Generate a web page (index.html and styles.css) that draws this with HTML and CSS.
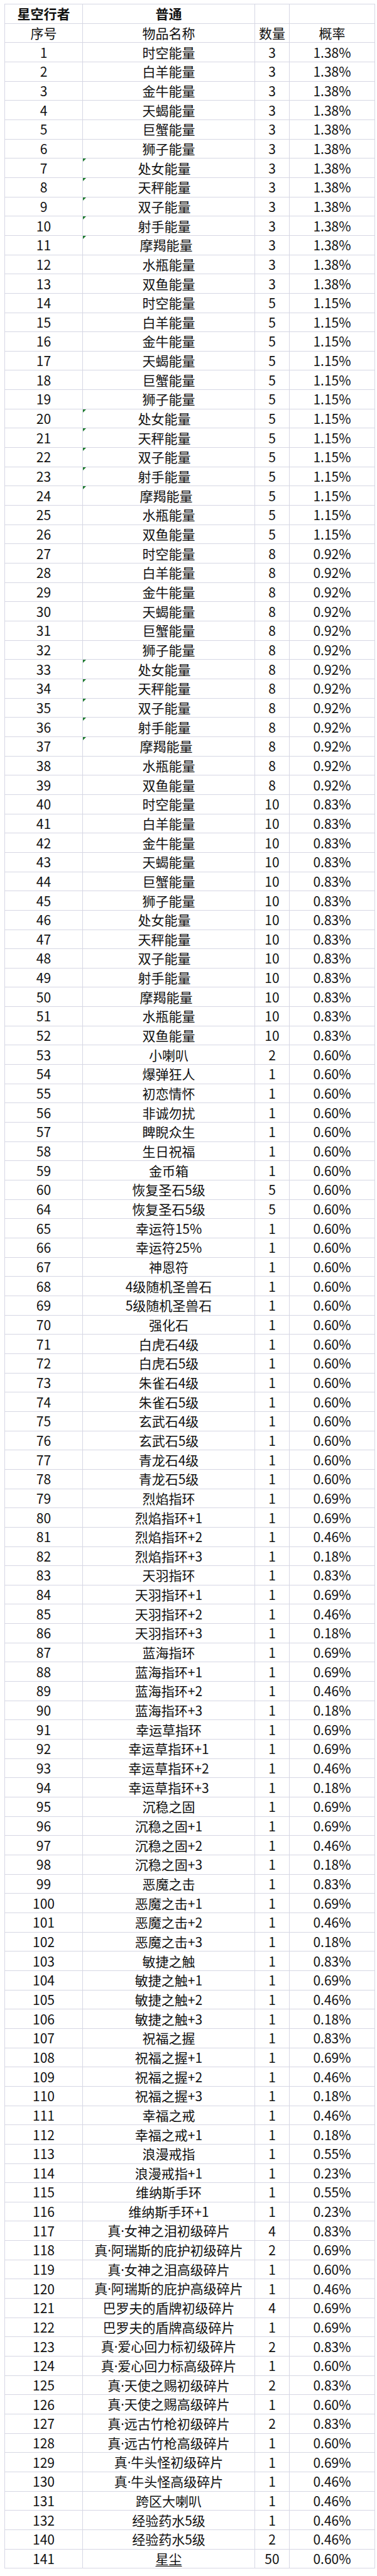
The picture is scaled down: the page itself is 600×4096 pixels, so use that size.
FILE: index.html
```html
<!DOCTYPE html>
<html lang="zh-CN">
<head>
<meta charset="utf-8">
<title>星空行者 普通</title>
<link rel="stylesheet" href="styles.css">
</head>
<body>
<table class="sheet">
<colgroup><col class="c1"><col class="c2"><col class="c3"><col class="c4"></colgroup>
<tbody>
<tr class="title"><td>星空行者</td><td>普通</td><td></td><td></td></tr>
<tr><td>序号</td><td>物品名称</td><td>数量</td><td>概率</td></tr>
<tr><td>1</td><td>时空能量</td><td>3</td><td>1.38%</td></tr>
<tr><td>2</td><td>白羊能量</td><td>3</td><td>1.38%</td></tr>
<tr><td>3</td><td>金牛能量</td><td>3</td><td>1.38%</td></tr>
<tr><td>4</td><td>天蝎能量</td><td>3</td><td>1.38%</td></tr>
<tr><td>5</td><td>巨蟹能量</td><td>3</td><td>1.38%</td></tr>
<tr><td>6</td><td>狮子能量</td><td>3</td><td>1.38%</td></tr>
<tr><td>7</td><td class="tri s1">处女能量</td><td>3</td><td>1.38%</td></tr>
<tr><td>8</td><td class="tri s1">天秤能量</td><td>3</td><td>1.38%</td></tr>
<tr><td>9</td><td class="tri s1">双子能量</td><td>3</td><td>1.38%</td></tr>
<tr><td>10</td><td class="tri s1">射手能量</td><td>3</td><td>1.38%</td></tr>
<tr><td>11</td><td class="tri s2">摩羯能量</td><td>3</td><td>1.38%</td></tr>
<tr><td>12</td><td>水瓶能量</td><td>3</td><td>1.38%</td></tr>
<tr><td>13</td><td>双鱼能量</td><td>3</td><td>1.38%</td></tr>
<tr><td>14</td><td>时空能量</td><td>5</td><td>1.15%</td></tr>
<tr><td>15</td><td>白羊能量</td><td>5</td><td>1.15%</td></tr>
<tr><td>16</td><td>金牛能量</td><td>5</td><td>1.15%</td></tr>
<tr><td>17</td><td>天蝎能量</td><td>5</td><td>1.15%</td></tr>
<tr><td>18</td><td>巨蟹能量</td><td>5</td><td>1.15%</td></tr>
<tr><td>19</td><td>狮子能量</td><td>5</td><td>1.15%</td></tr>
<tr><td>20</td><td class="tri s1">处女能量</td><td>5</td><td>1.15%</td></tr>
<tr><td>21</td><td class="tri s1">天秤能量</td><td>5</td><td>1.15%</td></tr>
<tr><td>22</td><td class="tri s1">双子能量</td><td>5</td><td>1.15%</td></tr>
<tr><td>23</td><td class="tri s1">射手能量</td><td>5</td><td>1.15%</td></tr>
<tr><td>24</td><td class="tri s2">摩羯能量</td><td>5</td><td>1.15%</td></tr>
<tr><td>25</td><td>水瓶能量</td><td>5</td><td>1.15%</td></tr>
<tr><td>26</td><td>双鱼能量</td><td>5</td><td>1.15%</td></tr>
<tr><td>27</td><td>时空能量</td><td>8</td><td>0.92%</td></tr>
<tr><td>28</td><td>白羊能量</td><td>8</td><td>0.92%</td></tr>
<tr><td>29</td><td>金牛能量</td><td>8</td><td>0.92%</td></tr>
<tr><td>30</td><td>天蝎能量</td><td>8</td><td>0.92%</td></tr>
<tr><td>31</td><td>巨蟹能量</td><td>8</td><td>0.92%</td></tr>
<tr><td>32</td><td>狮子能量</td><td>8</td><td>0.92%</td></tr>
<tr><td>33</td><td class="tri s1">处女能量</td><td>8</td><td>0.92%</td></tr>
<tr><td>34</td><td class="tri s1">天秤能量</td><td>8</td><td>0.92%</td></tr>
<tr><td>35</td><td class="tri s1">双子能量</td><td>8</td><td>0.92%</td></tr>
<tr><td>36</td><td class="tri s1">射手能量</td><td>8</td><td>0.92%</td></tr>
<tr><td>37</td><td class="tri s2">摩羯能量</td><td>8</td><td>0.92%</td></tr>
<tr><td>38</td><td>水瓶能量</td><td>8</td><td>0.92%</td></tr>
<tr><td>39</td><td>双鱼能量</td><td>8</td><td>0.92%</td></tr>
<tr><td>40</td><td>时空能量</td><td>10</td><td>0.83%</td></tr>
<tr><td>41</td><td>白羊能量</td><td>10</td><td>0.83%</td></tr>
<tr><td>42</td><td>金牛能量</td><td>10</td><td>0.83%</td></tr>
<tr><td>43</td><td>天蝎能量</td><td>10</td><td>0.83%</td></tr>
<tr><td>44</td><td>巨蟹能量</td><td>10</td><td>0.83%</td></tr>
<tr><td>45</td><td>狮子能量</td><td>10</td><td>0.83%</td></tr>
<tr><td>46</td><td class="s1">处女能量</td><td>10</td><td>0.83%</td></tr>
<tr><td>47</td><td class="s1">天秤能量</td><td>10</td><td>0.83%</td></tr>
<tr><td>48</td><td class="s1">双子能量</td><td>10</td><td>0.83%</td></tr>
<tr><td>49</td><td class="s1">射手能量</td><td>10</td><td>0.83%</td></tr>
<tr><td>50</td><td class="s2">摩羯能量</td><td>10</td><td>0.83%</td></tr>
<tr><td>51</td><td>水瓶能量</td><td>10</td><td>0.83%</td></tr>
<tr><td>52</td><td>双鱼能量</td><td>10</td><td>0.83%</td></tr>
<tr><td>53</td><td>小喇叭</td><td>2</td><td>0.60%</td></tr>
<tr><td>54</td><td>爆弹狂人</td><td>1</td><td>0.60%</td></tr>
<tr><td>55</td><td>初恋情怀</td><td>1</td><td>0.60%</td></tr>
<tr><td>56</td><td>非诚勿扰</td><td>1</td><td>0.60%</td></tr>
<tr><td>57</td><td>睥睨众生</td><td>1</td><td>0.60%</td></tr>
<tr><td>58</td><td>生日祝福</td><td>1</td><td>0.60%</td></tr>
<tr><td>59</td><td>金币箱</td><td>1</td><td>0.60%</td></tr>
<tr><td>60</td><td>恢复圣石5级</td><td>5</td><td>0.60%</td></tr>
<tr><td>64</td><td>恢复圣石5级</td><td>5</td><td>0.60%</td></tr>
<tr><td>65</td><td>幸运符15%</td><td>1</td><td>0.60%</td></tr>
<tr><td>66</td><td>幸运符25%</td><td>1</td><td>0.60%</td></tr>
<tr><td>67</td><td>神恩符</td><td>1</td><td>0.60%</td></tr>
<tr><td>68</td><td>4级随机圣兽石</td><td>1</td><td>0.60%</td></tr>
<tr><td>69</td><td>5级随机圣兽石</td><td>1</td><td>0.60%</td></tr>
<tr><td>70</td><td>强化石</td><td>1</td><td>0.60%</td></tr>
<tr><td>71</td><td>白虎石4级</td><td>1</td><td>0.60%</td></tr>
<tr><td>72</td><td>白虎石5级</td><td>1</td><td>0.60%</td></tr>
<tr><td>73</td><td>朱雀石4级</td><td>1</td><td>0.60%</td></tr>
<tr><td>74</td><td>朱雀石5级</td><td>1</td><td>0.60%</td></tr>
<tr><td>75</td><td>玄武石4级</td><td>1</td><td>0.60%</td></tr>
<tr><td>76</td><td>玄武石5级</td><td>1</td><td>0.60%</td></tr>
<tr><td>77</td><td>青龙石4级</td><td>1</td><td>0.60%</td></tr>
<tr><td>78</td><td>青龙石5级</td><td>1</td><td>0.60%</td></tr>
<tr><td>79</td><td>烈焰指环</td><td>1</td><td>0.69%</td></tr>
<tr><td>80</td><td>烈焰指环+1</td><td>1</td><td>0.69%</td></tr>
<tr><td>81</td><td>烈焰指环+2</td><td>1</td><td>0.46%</td></tr>
<tr><td>82</td><td>烈焰指环+3</td><td>1</td><td>0.18%</td></tr>
<tr><td>83</td><td>天羽指环</td><td>1</td><td>0.83%</td></tr>
<tr><td>84</td><td>天羽指环+1</td><td>1</td><td>0.69%</td></tr>
<tr><td>85</td><td>天羽指环+2</td><td>1</td><td>0.46%</td></tr>
<tr><td>86</td><td>天羽指环+3</td><td>1</td><td>0.18%</td></tr>
<tr><td>87</td><td>蓝海指环</td><td>1</td><td>0.69%</td></tr>
<tr><td>88</td><td>蓝海指环+1</td><td>1</td><td>0.69%</td></tr>
<tr><td>89</td><td>蓝海指环+2</td><td>1</td><td>0.46%</td></tr>
<tr><td>90</td><td>蓝海指环+3</td><td>1</td><td>0.18%</td></tr>
<tr><td>91</td><td>幸运草指环</td><td>1</td><td>0.69%</td></tr>
<tr><td>92</td><td>幸运草指环+1</td><td>1</td><td>0.69%</td></tr>
<tr><td>93</td><td>幸运草指环+2</td><td>1</td><td>0.46%</td></tr>
<tr><td>94</td><td>幸运草指环+3</td><td>1</td><td>0.18%</td></tr>
<tr><td>95</td><td>沉稳之固</td><td>1</td><td>0.69%</td></tr>
<tr><td>96</td><td>沉稳之固+1</td><td>1</td><td>0.69%</td></tr>
<tr><td>97</td><td>沉稳之固+2</td><td>1</td><td>0.46%</td></tr>
<tr><td>98</td><td>沉稳之固+3</td><td>1</td><td>0.18%</td></tr>
<tr><td>99</td><td>恶魔之击</td><td>1</td><td>0.83%</td></tr>
<tr><td>100</td><td>恶魔之击+1</td><td>1</td><td>0.69%</td></tr>
<tr><td>101</td><td>恶魔之击+2</td><td>1</td><td>0.46%</td></tr>
<tr><td>102</td><td>恶魔之击+3</td><td>1</td><td>0.18%</td></tr>
<tr><td>103</td><td>敏捷之触</td><td>1</td><td>0.83%</td></tr>
<tr><td>104</td><td>敏捷之触+1</td><td>1</td><td>0.69%</td></tr>
<tr><td>105</td><td>敏捷之触+2</td><td>1</td><td>0.46%</td></tr>
<tr><td>106</td><td>敏捷之触+3</td><td>1</td><td>0.18%</td></tr>
<tr><td>107</td><td>祝福之握</td><td>1</td><td>0.83%</td></tr>
<tr><td>108</td><td>祝福之握+1</td><td>1</td><td>0.69%</td></tr>
<tr><td>109</td><td>祝福之握+2</td><td>1</td><td>0.46%</td></tr>
<tr><td>110</td><td>祝福之握+3</td><td>1</td><td>0.18%</td></tr>
<tr><td>111</td><td>幸福之戒</td><td>1</td><td>0.46%</td></tr>
<tr><td>112</td><td>幸福之戒+1</td><td>1</td><td>0.18%</td></tr>
<tr><td>113</td><td>浪漫戒指</td><td>1</td><td>0.55%</td></tr>
<tr><td>114</td><td>浪漫戒指+1</td><td>1</td><td>0.23%</td></tr>
<tr><td>115</td><td>维纳斯手环</td><td>1</td><td>0.55%</td></tr>
<tr><td>116</td><td>维纳斯手环+1</td><td>1</td><td>0.23%</td></tr>
<tr><td>117</td><td>真<span class="dot">·</span>女神之泪初级碎片</td><td>4</td><td>0.83%</td></tr>
<tr><td>118</td><td>真<span class="dot">·</span>阿瑞斯的庇护初级碎片</td><td>2</td><td>0.69%</td></tr>
<tr><td>119</td><td>真<span class="dot">·</span>女神之泪高级碎片</td><td>1</td><td>0.60%</td></tr>
<tr><td>120</td><td>真<span class="dot">·</span>阿瑞斯的庇护高级碎片</td><td>1</td><td>0.46%</td></tr>
<tr><td>121</td><td>巴罗夫的盾牌初级碎片</td><td>4</td><td>0.69%</td></tr>
<tr><td>122</td><td>巴罗夫的盾牌高级碎片</td><td>1</td><td>0.69%</td></tr>
<tr><td>123</td><td>真<span class="dot">·</span>爱心回力标初级碎片</td><td>2</td><td>0.83%</td></tr>
<tr><td>124</td><td>真<span class="dot">·</span>爱心回力标高级碎片</td><td>1</td><td>0.60%</td></tr>
<tr><td>125</td><td>真<span class="dot">·</span>天使之赐初级碎片</td><td>2</td><td>0.83%</td></tr>
<tr><td>126</td><td>真<span class="dot">·</span>天使之赐高级碎片</td><td>1</td><td>0.60%</td></tr>
<tr><td>127</td><td>真<span class="dot">·</span>远古竹枪初级碎片</td><td>2</td><td>0.83%</td></tr>
<tr><td>128</td><td>真<span class="dot">·</span>远古竹枪高级碎片</td><td>1</td><td>0.60%</td></tr>
<tr><td>129</td><td>真<span class="dot">·</span>牛头怪初级碎片</td><td>1</td><td>0.69%</td></tr>
<tr><td>130</td><td>真<span class="dot">·</span>牛头怪高级碎片</td><td>1</td><td>0.46%</td></tr>
<tr><td>131</td><td>跨区大喇叭</td><td>1</td><td>0.46%</td></tr>
<tr><td>132</td><td>经验药水5级</td><td>1</td><td>0.46%</td></tr>
<tr><td>140</td><td>经验药水5级</td><td>2</td><td>0.46%</td></tr>
<tr><td>141</td><td class="ul">星尘</td><td>50</td><td>0.60%</td></tr>
</tbody>
</table>
</body>
</html>
```

FILE: styles.css
```css
html, body {
  margin: 0;
  padding: 0;
  background: #ffffff;
}

body {
  padding: 6px 0 0 7px;
  font-family: "Noto Sans CJK SC", "Noto Sans", sans-serif;
  color: #111111;
}

.sheet {
  border-collapse: collapse;
  table-layout: fixed;
  width: 589px;
}

.c1 { width: 124px; }
.c2 { width: 274px; }
.c3 { width: 55px; }
.c4 { width: 136px; }

.sheet tr {
  height: 30.66px;
}

.sheet td {
  border: 1px solid #d6d7e4;
  padding: 0;
  text-align: center;
  vertical-align: middle;
  font-size: 21px;
  line-height: 1;
  white-space: nowrap;
  overflow: hidden;
  position: relative;
}

.title td {
  font-weight: 700;
}

.s1 { padding-right: 14px !important; }
.s2 { padding-right: 8px !important; }

.dot {
  font-family: "Noto Sans", "DejaVu Sans", sans-serif;
}

.tri::before {
  content: "";
  position: absolute;
  left: 0;
  top: 0;
  width: 0;
  height: 0;
  border-top: 5px solid #1d7a2e;
  border-right: 5px solid transparent;
}

.ul {
  text-decoration: underline;
  text-decoration-thickness: 1px;
  text-underline-offset: 3px;
}
```
